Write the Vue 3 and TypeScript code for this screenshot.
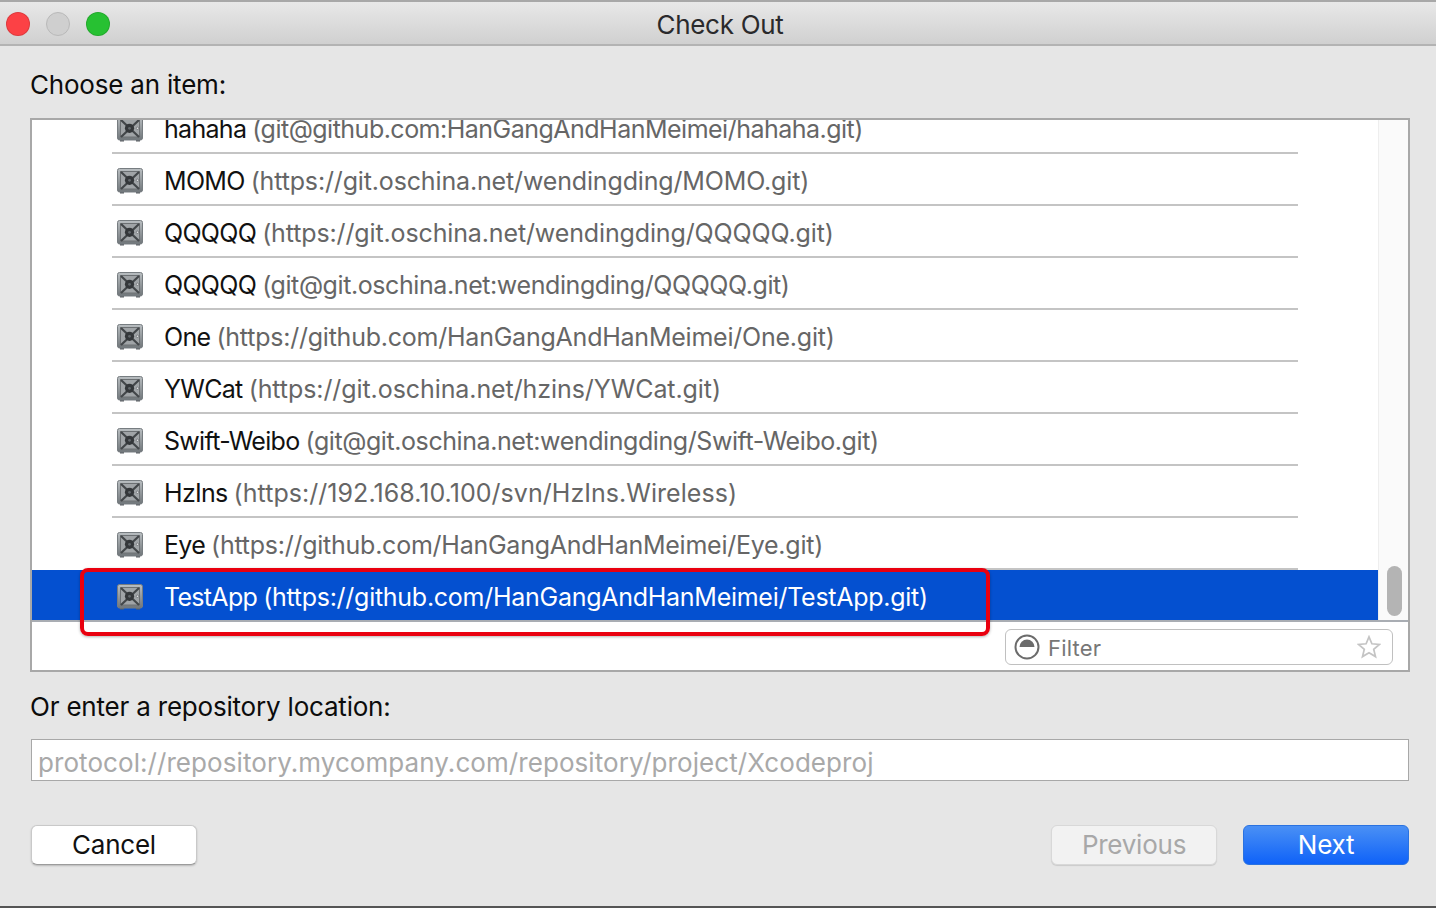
<script setup lang="ts">
interface Repo { name: string; url: string; spacing: number; selected?: boolean }
const repos: Repo[] = [
  { name: 'hahaha', url: 'git@github.com:HanGangAndHanMeimei/hahaha.git', spacing: -0.51 },
  { name: 'MOMO', url: 'https://git.oschina.net/wendingding/MOMO.git', spacing: -0.15 },
  { name: 'QQQQQ', url: 'https://git.oschina.net/wendingding/QQQQQ.git', spacing: -0.13 },
  { name: 'QQQQQ', url: 'git@git.oschina.net:wendingding/QQQQQ.git', spacing: -0.41 },
  { name: 'One', url: 'https://github.com/HanGangAndHanMeimei/One.git', spacing: -0.23 },
  { name: 'YWCat', url: 'https://git.oschina.net/hzins/YWCat.git', spacing: -0.08 },
  { name: 'Swift-Weibo', url: 'git@git.oschina.net:wendingding/Swift-Weibo.git', spacing: -0.42 },
  { name: 'HzIns', url: 'https://192.168.10.100/svn/HzIns.Wireless', spacing: 0.04 },
  { name: 'Eye', url: 'https://github.com/HanGangAndHanMeimei/Eye.git', spacing: -0.25 },
  { name: 'TestApp', url: 'https://github.com/HanGangAndHanMeimei/TestApp.git', spacing: -0.27, selected: true },
]
</script>

<template>
  <div class="window">
    <header class="titlebar">
      <div class="lights">
        <span class="light red"></span>
        <span class="light grey"></span>
        <span class="light green"></span>
      </div>
      <div class="title">Check Out</div>
    </header>

    <main class="content">
      <div class="label first">Choose an item:</div>

      <section class="panel">
        <div class="list-area">
          <div class="list">
            <div v-for="(r, i) in repos" :key="i" class="row" :class="{ selected: r.selected }">
              <div class="row-inner">
                <svg class="safe" width="28" height="28" viewBox="0 0 28 28">
                  <defs>
                    <linearGradient :id="'body' + i" x1="0" y1="0" x2="0" y2="1">
                      <stop offset="0" stop-color="#b9bec1" />
                      <stop offset="1" stop-color="#70767a" />
                    </linearGradient>
                  </defs>
                  <rect x="4" y="24" width="4" height="2.500" fill="#5a5f63" />
                  <rect x="20" y="24" width="4" height="2.500" fill="#5a5f63" />
                  <rect x="1.500" y="1.500" width="25" height="23.500" rx="2" :fill="'url(#body' + i + ')'" stroke="#777d81" stroke-width="1" />
                  <rect x="4.500" y="4.500" width="19" height="17.500" fill="#a0a4a7" stroke="#6c7073" stroke-width="1" />
                  <path d="M5 5l18 17M23 5L5 22" stroke="#43474a" stroke-width="2.200" />
                  <circle cx="13.500" cy="13.300" r="4.600" fill="#34373a" />
                  <circle cx="13.500" cy="13.300" r="1.400" fill="#62676b" />
                  <circle cx="21.500" cy="13.300" r="1.200" fill="#dfe1e2" stroke="#55595c" stroke-width=".6" />
                </svg>
                <span class="text"><span class="name">{{ r.name }}</span> <span class="url" :style="{ letterSpacing: r.spacing + 'px' }">({{ r.url }})</span></span>
              </div>
            </div>
          </div>
          <aside class="scrollbar"><span class="thumb"></span></aside>
        </div>

        <div class="filter-bar">
          <div class="filter">
            <svg class="filter-icon" width="26" height="26" viewBox="0 0 26 26">
              <circle cx="13" cy="13" r="11.500" fill="#fff" stroke="#6b6b6b" stroke-width="2" />
              <path d="M5.500 13a7.500 7.500 0 0 1 15 0z" fill="#6b6b6b" />
            </svg>
            <span class="filter-text">Filter</span>
            <svg class="star" width="24" height="24" viewBox="0 0 24 24">
              <path d="M12 1.800l2.900 7 7.500.6-5.700 4.900 1.800 7.300L12 17.700l-6.500 3.900 1.800-7.300L1.600 9.400l7.500-.6z" fill="none" stroke="#c4c4c4" stroke-width="1.700" />
            </svg>
          </div>
        </div>

        <div class="highlight"></div>
      </section>

      <div class="label second">Or enter a repository location:</div>
      <div class="location">protocol://repository.mycompany.com/repository/project/Xcodeproj</div>

      <footer class="buttons">
        <button class="btn cancel">Cancel</button>
        <div class="nav">
          <button class="btn previous">Previous</button>
          <button class="btn next">Next</button>
        </div>
      </footer>
    </main>
  </div>
</template>

<style>
html, body { margin: 0; background: #e6e6e6; }
</style>

<style scoped>
.window {
  width: 1436px;
  height: 908px;
  overflow: hidden;
  display: flex;
  flex-direction: column;
  background: #e6e6e6;
  border-bottom: 2px solid #555;
  box-sizing: border-box;
  font-family: Inter, "Liberation Sans", sans-serif;
  color: #111;
}
.titlebar {
  height: 46px;
  box-sizing: border-box;
  flex: none;
  position: relative;
  display: flex;
  align-items: center;
  justify-content: center;
  padding-top: 3px;
  border-top: 2px solid #a8a8a8;
  border-bottom: 2px solid #b3b3b3;
  background: linear-gradient(#e8e8e8, #d0d0d0);
}
.lights {
  position: absolute;
  left: 6px;
  top: 10px;
  display: flex;
  gap: 16px;
}
.light {
  width: 24px;
  height: 24px;
  border-radius: 50%;
  box-sizing: border-box;
  border: 1px solid rgba(0, 0, 0, 0.12);
}
.red { background: #fc4145; }
.grey { background: #cfcfcf; border-color: #b9b9b9; }
.green { background: #27c132; }
.title {
  margin-left: 4px;
  font-size: 26px;
  letter-spacing: -0.3px;
  color: #2a2a2c;
}
.content {
  flex: 1;
  padding: 0 26px 0 30px;
  display: flex;
  flex-direction: column;
}
.label {
  font-size: 26px;
  line-height: 30px;
  letter-spacing: -0.2px;
  color: #0c0c0c;
}
.first { margin-top: 24px; }
.panel {
  position: relative;
  margin-top: 18px;
  height: 554px;
  box-sizing: border-box;
  border: 2px solid #a8a8a8;
  background: #fff;
  display: flex;
  flex-direction: column;
}
.list-area {
  height: 500px;
  flex: none;
  display: flex;
  overflow: hidden;
  border-bottom: 2px solid #a9adb3;
  box-sizing: content-box;
}
.list {
  flex: 1;
  margin-top: -18px;
  min-width: 0;
}
.row {
  height: 52px;
  box-sizing: border-box;
  padding-left: 80px;
}
.row-inner {
  height: 52px;
  width: 1186px;
  box-sizing: border-box;
  border-bottom: 2px solid #c4c4c4;
  display: flex;
  align-items: center;
  padding: 4px 0 0 4px;
}
.row.selected {
  background: #0450d0;
  height: 50px;
}
.row.selected .row-inner {
  border-bottom: none;
  height: 50px;
  padding-top: 4px;
}
.safe { flex: none; }
.text {
  margin-left: 20px;
  font-size: 25px;
  white-space: nowrap;
}
.name { color: #111; letter-spacing: -0.7px; }
.url { color: #666; margin-left: -1px; }
.selected .name, .selected .url { color: #fff; }
.scrollbar {
  width: 30px;
  flex: none;
  background: #fafafa;
  border-left: 1px solid #eee;
  box-sizing: border-box;
  position: relative;
}
.thumb {
  position: absolute;
  left: 8px;
  top: 446px;
  width: 15px;
  height: 50px;
  border-radius: 8px;
  background: #b4b4b4;
}
.filter-bar {
  flex: 1;
  display: flex;
  justify-content: flex-end;
  padding: 7px 15px 0 0;
}
.filter {
  width: 388px;
  height: 36px;
  box-sizing: border-box;
  border: 1px solid #c0c0c0;
  border-radius: 6px;
  display: flex;
  align-items: center;
  padding: 0 11px 0 8px;
}
.filter-text {
  margin-left: 8px;
  padding-top: 2px;
  font-size: 22px;
  letter-spacing: 0.2px;
  color: #777;
  flex: 1;
}
.star { flex: none; }
.highlight {
  position: absolute;
  left: 48px;
  top: 448px;
  width: 910px;
  height: 68px;
  box-sizing: border-box;
  border: 4px solid #e9000f;
  border-radius: 8px;
  box-shadow: 0 1px 3px rgba(0, 0, 0, 0.3);
  pointer-events: none;
}
.second { margin-top: 20px; }
.location {
  margin: 17px 1px 0;
  height: 42px;
  box-sizing: border-box;
  border: 1px solid #a8a8a8;
  background: #fff;
  padding: 3px 0 0 6px;
  font-size: 26px;
  line-height: 40px;
  letter-spacing: 0.07px;
  color: #a9a9a9;
  white-space: nowrap;
  overflow: hidden;
}
.buttons {
  margin-top: 44px;
  padding: 0 1px;
  display: flex;
  justify-content: space-between;
}
.nav { display: flex; gap: 26px; }
.btn {
  width: 166px;
  height: 40px;
  box-sizing: border-box;
  border-radius: 6px;
  font-family: inherit;
  font-size: 26px;
  padding: 0 0 1px;
  letter-spacing: -0.25px;
}
.cancel {
  background: #fff;
  color: #111;
  border: 1px solid #c9c9c9;
  border-bottom-color: #9c9c9c;
  box-shadow: 0 1px 2px rgba(0, 0, 0, 0.2);
}
.previous {
  background: #f2f2f2;
  color: #a8a8a8;
  border: 1px solid #d8d8d8;
  box-shadow: 0 1px 1px rgba(0, 0, 0, 0.12);
}
.next {
  background: linear-gradient(#4a90f5, #0f62f8);
  color: #fff;
  border: 1px solid #2a72e0;
}
</style>
